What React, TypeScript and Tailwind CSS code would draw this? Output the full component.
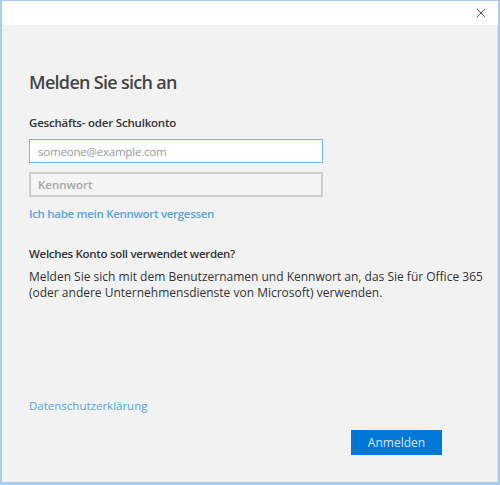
import React from 'react'

const font = { fontFamily: '"Segoe UI", "Open Sans", "Noto Sans", sans-serif' }

export default function App() {
  return (
    <div
      className="w-[500px] h-[485px] bg-[#f2f2f2] border-x-2 border-t border-b-[3px] border-[#a7cdf0] flex flex-col text-[#333333] overflow-hidden"
      style={font}
    >
      <div className="h-[24px] bg-white flex items-center justify-end pr-[8px] shrink-0">
        <button className="w-[18px] h-[18px] flex items-center justify-center">
          <svg width="10" height="10" viewBox="0 0 10 10">
            <path d="M1 1 L9 9 M9 1 L1 9" stroke="#555" strokeWidth="1" />
          </svg>
        </button>
      </div>

      <div className="flex-1 flex flex-col pl-[27px] border-r border-[#e0e0e0]">
        <h1 className="mt-[44px] text-[18px] font-semibold leading-[26px] text-[#444] tracking-[-0.7px]">
          Melden Sie sich an
        </h1>

        <div className="mt-[20px] text-[11.5px] font-semibold leading-[16px] text-[#333] tracking-[-0.2px]">
          Geschäfts- oder Schulkonto
        </div>

        <input
          className="mt-[8px] w-[294px] h-[24px] bg-white border border-[#7eb4ea] px-[8px] text-[11.5px] font-medium outline-none placeholder:text-[#999999] tracking-[-0.2px]"
          placeholder="someone@example.com"
          style={font}
        />
        <input
          className="mt-[9px] w-[294px] h-[25px] bg-[#f4f4f4] border-2 border-[#cccccc] px-[7px] text-[11.5px] font-semibold outline-none placeholder:text-[#a6a6a6]"
          placeholder="Kennwort"
          style={font}
        />

        <a className="mt-[8px] text-[11.5px] font-semibold leading-[18px] text-[#5aa2dc] tracking-[-0.3px]">
          Ich habe mein Kennwort vergessen
        </a>

        <div className="mt-[23px] text-[11.5px] font-semibold leading-[16px] text-[#333] tracking-[-0.3px]">
          Welches Konto soll verwendet werden?
        </div>
        <p className="mt-[7px] text-[12px] leading-[16px] text-[#333]">
          Melden Sie sich mit dem Benutzernamen und Kennwort an, das Sie für Office 365
          <br />
          (oder andere Unternehmensdienste von Microsoft) verwenden.
        </p>

        <div className="mt-auto text-[11.5px] leading-[16px] text-[#5aa2e0]">Datenschutzerklärung</div>

        <button
          className="mt-[16px] mb-[27px] mr-[55px] self-end w-[91px] h-[25px] bg-[#0078d7] text-[12px] text-[#d8e8f8] flex items-center justify-center"
          style={font}
        >
          Anmelden
        </button>
      </div>
    </div>
  )
}
